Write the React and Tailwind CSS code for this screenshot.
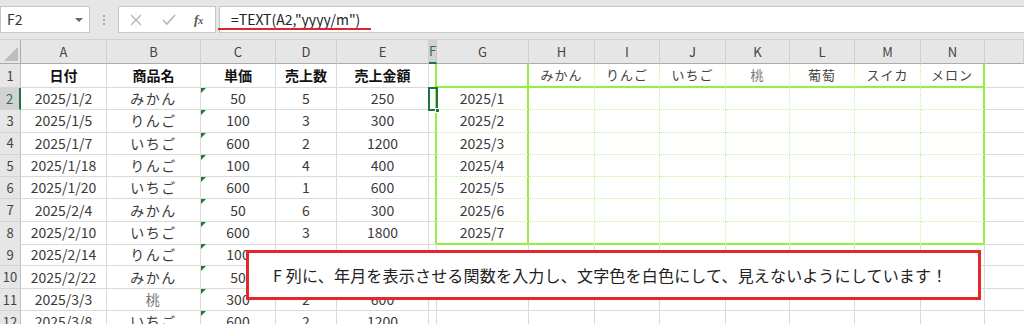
const FONT = { fontFamily: '"Noto Sans CJK JP", "Noto Sans", sans-serif' };

const cols = ["A", "B", "C", "D", "E", "F", "G", "H", "I", "J", "K", "L", "M", "N", ""];
const fruits = ["みかん", "りんご", "いちご", "桃", "葡萄", "スイカ", "メロン"];

const rows = [
  ["2025/1/2", "みかん", "50", "5", "250", "2025/1"],
  ["2025/1/5", "りんご", "100", "3", "300", "2025/2"],
  ["2025/1/7", "いちご", "600", "2", "1200", "2025/3"],
  ["2025/1/18", "りんご", "100", "4", "400", "2025/4"],
  ["2025/1/20", "いちご", "600", "1", "600", "2025/5"],
  ["2025/2/4", "みかん", "50", "6", "300", "2025/6"],
  ["2025/2/10", "いちご", "600", "3", "1800", "2025/7"],
  ["2025/2/14", "りんご", "100", "2", "200", ""],
  ["2025/2/22", "みかん", "50", "4", "200", ""],
  ["2025/3/3", "桃", "300", "2", "600", ""],
  ["2025/3/8", "いちご", "600", "2", "1200", ""],
];

const GRID =
  "grid grid-cols-[21px_86px_94px_75px_61px_92px_8px_92px_66px_65px_66px_64px_65px_66px_64px_1fr]";

// border classes for a body cell, r = excel row (1..12), c = 1..15 (A..O)
function edge(r, c) {
  const inBox = r <= 8;
  const gray = "border-[#dadada]";
  if (c <= 5) return `border-r border-b ${gray}`;
  if (c === 6) {
    return inBox
      ? "border-b border-b-[#dadada] border-r-2 border-r-[#94ef3e]"
      : `border-r border-b ${gray}`;
  }
  if (c === 15) return `border-b ${gray}`;
  if (!inBox) return `border-r border-b ${gray}`;

  let bottom;
  if (r === 1 || r === 8) bottom = "border-b-2 border-b-[#94ef3e]";
  else bottom = "border-b border-b-[#c6f3a0] [border-bottom-style:dotted]!";

  let right;
  if (c === 7 || c === 14) right = "border-r-2 border-r-[#94ef3e]";
  else right = "border-r border-r-[#c6f3a0] [border-right-style:dotted]!";
  return `${bottom} ${right}`;
}

function Cell({ r, c, children, className = "" }) {
  return (
    <div
      className={`relative flex items-center justify-center overflow-visible whitespace-nowrap ${edge(r, c)} ${className}`}
    >
      {c === 3 && r > 1 && (
        <span className="absolute left-0 top-0 h-0 w-0 border-t-[5px] border-r-[5px] border-t-[#1d7d2f] border-r-transparent" />
      )}
      {children}
    </div>
  );
}

function RowHead({ n }) {
  const sel = n === 2;
  return (
    <div
      className={`flex items-center justify-center border-b border-b-[#d4d4d4] text-[13px] ${
        sel
          ? "bg-[#d2d2d2] text-[#217346] border-r-2 border-r-[#217346]"
          : "bg-[#e6e6e6] text-[#444] border-r border-r-[#c0c0c0]"
      }`}
    >
      {n}
    </div>
  );
}

function FormulaBar() {
  return (
    <div className="flex h-[40px] items-center bg-[#e6e6e6] border-b border-[#d0d0d0]">
      <div className="ml-0 flex h-[27px] w-[90px] items-center justify-between border border-[#c6c6c6] bg-white pl-[6px] pr-[6px] text-[14px] text-[#333]">
        <span>F2</span>
        <span className="h-0 w-0 border-x-[4px] border-t-[4px] border-x-transparent border-t-[#666]" />
      </div>
      <div className="flex w-[28px] flex-col items-center gap-[2px]">
        <span className="h-[2px] w-[2px] bg-[#aaa]" />
        <span className="h-[2px] w-[2px] bg-[#aaa]" />
        <span className="h-[2px] w-[2px] bg-[#aaa]" />
      </div>
      <div className="flex h-[27px] w-[98px] items-center border border-[#c6c6c6] bg-white">
        <svg width="12" height="12" viewBox="0 0 12 12" className="ml-[11px]">
          <path d="M1 1 L11 11 M11 1 L1 11" stroke="#b5b5b5" strokeWidth="1.4" />
        </svg>
        <svg width="14" height="12" viewBox="0 0 14 12" className="ml-[20px]">
          <path d="M1 6 L5 10 L13 1" stroke="#b5b5b5" strokeWidth="1.6" fill="none" />
        </svg>
        <span
          className="ml-[18px] text-[13px] italic font-bold text-[#555]"
          style={{ fontFamily: '"Liberation Serif", serif' }}
        >
          f<span className="text-[10px]">x</span>
        </span>
      </div>
      <div className="relative ml-[3px] flex h-[27px] flex-1 items-center border-y border-l border-[#c6c6c6] bg-white pl-[11px] text-[14px] text-[#222]">
        =TEXT(A2,"yyyy/m")
        <span className="absolute bottom-[2px] left-[-2px] h-[2px] w-[153px] bg-[#e3232a]" />
      </div>
    </div>
  );
}

export default function App() {
  return (
    <div className="h-[324px] w-[1024px] overflow-hidden bg-white" style={FONT}>
      <FormulaBar />
      <div className="relative">
        {/* column headers */}
        <div className={`${GRID} h-[24px] bg-[#e6e6e6] text-[13px] text-[#444]`}>
          <div className="flex items-end justify-end border-r border-b border-[#ababab] p-[2px]">
            <svg width="14" height="14" viewBox="0 0 14 14">
              <polygon points="14,0 14,14 0,14" fill="#bdbdbd" />
            </svg>
          </div>
          {cols.map((l, i) =>
            l === "F" ? (
              <div
                key={i}
                className="flex items-center justify-center border-r border-r-[#c6c6c6] border-b-2 border-b-[#217346] bg-[#d2d2d2] text-[#217346]"
              >
                {l}
              </div>
            ) : (
              <div
                key={i}
                className="flex items-center justify-center border-r border-r-[#cfcfcf] border-b border-b-[#ababab]"
              >
                {l}
              </div>
            )
          )}
        </div>

        {/* row 1 */}
        <div className={`${GRID} h-[24px] text-[14px]`}>
          <RowHead n={1} />
          {["日付", "商品名", "単価", "売上数", "売上金額"].map((t, i) => (
            <Cell key={i} r={1} c={i + 1} className="font-bold text-[#111]">
              {t}
            </Cell>
          ))}
          <Cell r={1} c={6} />
          <Cell r={1} c={7} />
          {fruits.map((f, i) => (
            <Cell
              key={f}
              r={1}
              c={i + 8}
              className={`text-[13px] tracking-[1px] ${f === "桃" ? "text-[#777]" : "text-[#444]"}`}
            >
              {f}
            </Cell>
          ))}
          <Cell r={1} c={15} />
        </div>

        {/* data rows */}
        {rows.map((d, idx) => {
          const r = idx + 2;
          return (
            <div key={r} className={`${GRID} h-[22.3px] text-[14px] text-[#3a3a3a]`}>
              <RowHead n={r} />
              {d.slice(0, 5).map((t, i) => (
                <Cell
                  key={i}
                  r={r}
                  c={i + 1}
                  className={`${i === 1 ? "tracking-[1.5px]" : ""} ${t === "桃" ? "text-[#777]" : ""}`}
                >
                  {t}
                </Cell>
              ))}
              <Cell r={r} c={6} />
              <Cell r={r} c={7}>{d[5]}</Cell>
              {[8, 9, 10, 11, 12, 13, 14, 15].map((c) => (
                <Cell key={c} r={r} c={c} />
              ))}
            </div>
          );
        })}

        {/* selected cell F2 */}
        <div className="absolute left-[428px] top-[47px] h-[24px] w-[10px] border-2 border-[#217346]">
          <span className="absolute bottom-[-4px] right-[-4px] h-[5px] w-[5px] border border-white bg-[#217346]" />
        </div>

        {/* callout */}
        <div className="absolute left-[246px] top-[210px] flex h-[50px] w-[735px] items-center border-[3px] border-[#e5262c] bg-white pl-[24px] text-[16px] tracking-[0.2px] text-[#222]">
          F 列に、年月を表示させる関数を入力し、文字色を白色にして、見えないようにしています！
        </div>
      </div>
    </div>
  );
}
